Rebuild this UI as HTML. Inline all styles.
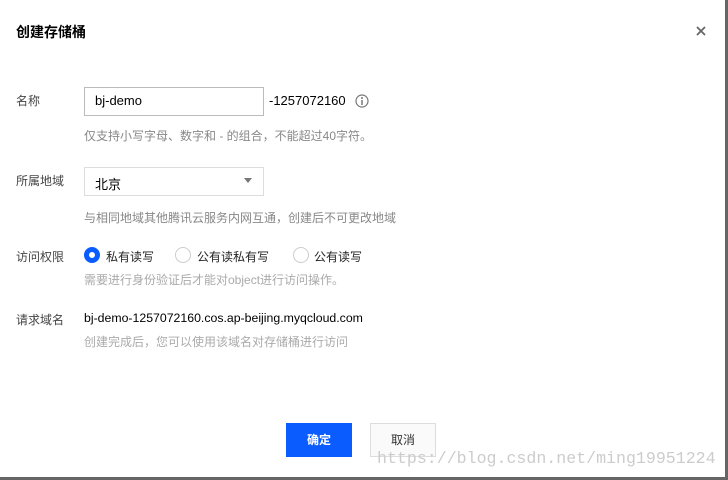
<!DOCTYPE html>
<html><head><meta charset="utf-8"><style>
*{margin:0;padding:0;box-sizing:border-box}
body{width:728px;height:480px;background:#fff;position:relative;overflow:hidden;font-family:"Liberation Sans","Noto Sans CJK SC",sans-serif;color:#000}
.a{position:absolute;white-space:nowrap}
.lbl{font-size:12px;color:#444}
.hint{font-size:12px;color:#888}
.rad{position:absolute;width:16px;height:16px;border-radius:50%;border:1px solid #ccc;background:#fff}
</style></head><body>
<div class="a" style="left:16px;top:22px;font-size:14px;font-weight:bold;color:#000">创建存储桶</div>
<svg class="a" style="left:696px;top:26px" width="10" height="10"><path d="M1 1L9 9M9 1L1 9" stroke="#666" stroke-width="1.8"/></svg>

<div class="a lbl" style="left:16px;top:92px">名称</div>
<div class="a" style="left:84px;top:87px;width:180px;height:29px;border:1px solid #bbb"></div>
<div class="a" style="left:95px;top:93px;font-size:13px;color:#000">bj-demo</div>
<div class="a" style="left:269px;top:93px;font-size:13px;color:#000">-1257072160</div>
<svg class="a" style="left:355px;top:94px" width="14" height="14"><circle cx="7" cy="7" r="6" fill="none" stroke="#777" stroke-width="1.2"/><circle cx="7" cy="4" r="1" fill="#777"/><path d="M7 6v5" stroke="#777" stroke-width="1.5"/></svg>
<div class="a hint" style="left:84px;top:127px">仅支持小写字母、数字和 - 的组合，不能超过40字符。</div>

<div class="a lbl" style="left:16px;top:172px">所属地域</div>
<div class="a" style="left:84px;top:167px;width:180px;height:29px;border:1px solid #ddd"></div>
<div class="a" style="left:95px;top:174px;font-size:13px">北京</div>
<svg class="a" style="left:244px;top:178px" width="8" height="5"><path d="M0 0H8L4 5Z" fill="#777"/></svg>
<div class="a hint" style="left:84px;top:209px">与相同地域其他腾讯云服务内网互通，创建后不可更改地域</div>

<div class="a lbl" style="left:16px;top:248px">访问权限</div>
<div class="rad" style="left:84px;top:247px;border:5px solid #0a5cff"></div>
<div class="a" style="left:106px;top:248px;font-size:12px;color:#222">私有读写</div>
<div class="rad" style="left:175px;top:247px"></div>
<div class="a" style="left:197px;top:248px;font-size:12px;color:#222">公有读私有写</div>
<div class="rad" style="left:293px;top:247px"></div>
<div class="a" style="left:314px;top:248px;font-size:12px;color:#222">公有读写</div>
<div class="a hint" style="left:84px;top:271px;color:#aaa">需要进行身份验证后才能对object进行访问操作。</div>

<div class="a lbl" style="left:16px;top:311px">请求域名</div>
<div class="a" style="left:84px;top:311px;font-size:12.3px;color:#000">bj-demo-1257072160.cos.ap-beijing.myqcloud.com</div>
<div class="a hint" style="left:84px;top:333px;color:#aaa">创建完成后，您可以使用该域名对存储桶进行访问</div>

<div class="a" style="left:286px;top:423px;width:66px;height:34px;background:#0a5cff;color:#fff;font-size:12px;font-weight:bold;text-align:center;line-height:34px">确定</div>
<div class="a" style="left:370px;top:423px;width:66px;height:34px;border:1px solid #ddd;background:#fafafa;color:#333;font-size:12px;text-align:center;line-height:32px">取消</div>
<div class="a" style="left:377px;top:449px;font-family:'Liberation Mono','DejaVu Sans Mono',monospace;font-size:16.6px;color:#ccc">https://blog.csdn.net/ming19951224</div>

<div class="a" style="left:725px;top:0;width:3px;height:480px;background:#666"></div>
<div class="a" style="left:0;top:477px;width:728px;height:3px;background:#666"></div>
</body></html>
